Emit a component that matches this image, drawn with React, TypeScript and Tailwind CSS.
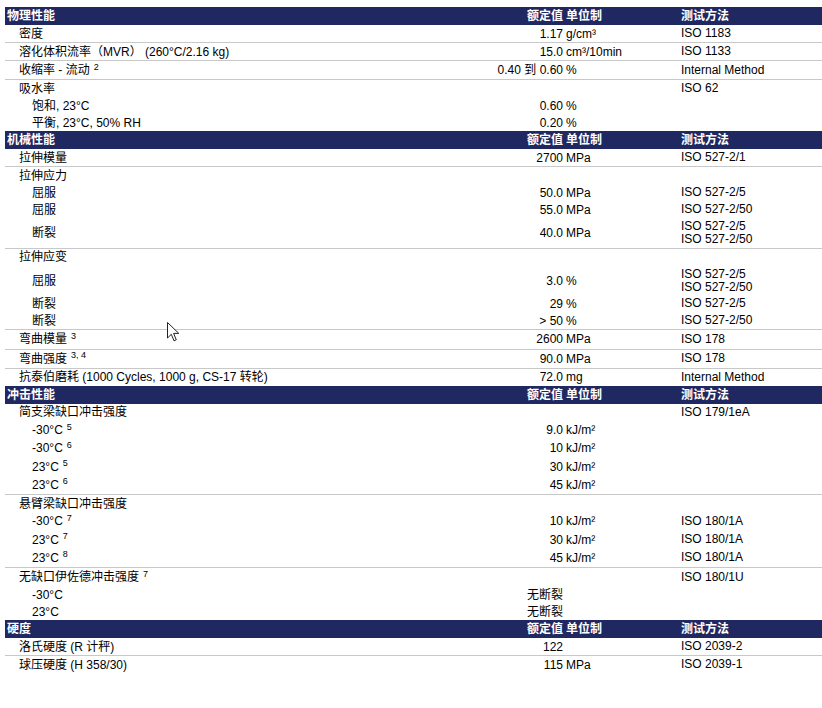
import React from 'react'

type Row = {
  label: string
  sup?: string
  level: 1 | 2
  num?: string
  unit?: string
  method?: string[]
  text?: string // free value, e.g. 无断裂
}

type Section = { title: string; groups: Row[][] }

const SECTIONS: Section[] = [
  {
    title: '物理性能',
    groups: [
      [{ label: '密度', level: 1, num: '1.17', unit: 'g/cm³', method: ['ISO 1183'] }],
      [{ label: '溶化体积流率（MVR） (260°C/2.16 kg)', level: 1, num: '15.0', unit: 'cm³/10min', method: ['ISO 1133'] }],
      [{ label: '收缩率 - 流动', sup: '2', level: 1, num: '0.40 到 0.60', unit: '%', method: ['Internal Method'] }],
      [
        { label: '吸水率', level: 1, method: ['ISO 62'] },
        { label: '饱和, 23°C', level: 2, num: '0.60', unit: '%' },
        { label: '平衡, 23°C, 50% RH', level: 2, num: '0.20', unit: '%' },
      ],
    ],
  },
  {
    title: '机械性能',
    groups: [
      [{ label: '拉伸模量', level: 1, num: '2700', unit: 'MPa', method: ['ISO 527-2/1'] }],
      [
        { label: '拉伸应力', level: 1 },
        { label: '屈服', level: 2, num: '50.0', unit: 'MPa', method: ['ISO 527-2/5'] },
        { label: '屈服', level: 2, num: '55.0', unit: 'MPa', method: ['ISO 527-2/50'] },
        { label: '断裂', level: 2, num: '40.0', unit: 'MPa', method: ['ISO 527-2/5', 'ISO 527-2/50'] },
      ],
      [
        { label: '拉伸应变', level: 1 },
        { label: '屈服', level: 2, num: '3.0', unit: '%', method: ['ISO 527-2/5', 'ISO 527-2/50'] },
        { label: '断裂', level: 2, num: '29', unit: '%', method: ['ISO 527-2/5'] },
        { label: '断裂', level: 2, num: '> 50', unit: '%', method: ['ISO 527-2/50'] },
      ],
      [{ label: '弯曲模量', sup: '3', level: 1, num: '2600', unit: 'MPa', method: ['ISO 178'] }],
      [{ label: '弯曲强度', sup: '3, 4', level: 1, num: '90.0', unit: 'MPa', method: ['ISO 178'] }],
      [{ label: '抗泰伯磨耗 (1000 Cycles, 1000 g, CS-17 转轮)', level: 1, num: '72.0', unit: 'mg', method: ['Internal Method'] }],
    ],
  },
  {
    title: '冲击性能',
    groups: [
      [
        { label: '简支梁缺口冲击强度', level: 1, method: ['ISO 179/1eA'] },
        { label: '-30°C', sup: '5', level: 2, num: '9.0', unit: 'kJ/m²' },
        { label: '-30°C', sup: '6', level: 2, num: '10', unit: 'kJ/m²' },
        { label: '23°C', sup: '5', level: 2, num: '30', unit: 'kJ/m²' },
        { label: '23°C', sup: '6', level: 2, num: '45', unit: 'kJ/m²' },
      ],
      [
        { label: '悬臂梁缺口冲击强度', level: 1 },
        { label: '-30°C', sup: '7', level: 2, num: '10', unit: 'kJ/m²', method: ['ISO 180/1A'] },
        { label: '23°C', sup: '7', level: 2, num: '30', unit: 'kJ/m²', method: ['ISO 180/1A'] },
        { label: '23°C', sup: '8', level: 2, num: '45', unit: 'kJ/m²', method: ['ISO 180/1A'] },
      ],
      [
        { label: '无缺口伊佐德冲击强度', sup: '7', level: 1, method: ['ISO 180/1U'] },
        { label: '-30°C', level: 2, text: '无断裂' },
        { label: '23°C', level: 2, text: '无断裂' },
      ],
    ],
  },
  {
    title: '硬度',
    groups: [
      [{ label: '洛氏硬度 (R 计秤)', level: 1, num: '122', method: ['ISO 2039-2'] }],
      [{ label: '球压硬度 (H 358/30)', level: 1, num: '115', unit: 'MPa', method: ['ISO 2039-1'] }],
    ],
  },
]

const GRID = 'grid grid-cols-[475px_83px_118px_1fr] items-center'

function DataRow({ r }: { r: Row }) {
  const tall = (r.method?.length ?? 0) > 1
  const h = tall ? 'h-[29.5px]' : r.sup ? 'h-[18.3px]' : 'h-[17px]'
  return (
    <div className={`${GRID} ${h}`}>
      <div className={`whitespace-nowrap ${r.level === 1 ? 'pl-[14px]' : 'pl-[27px]'}`}>
        {r.label}
        {r.sup && <sup className="text-[9px] ml-[4px] leading-none">{r.sup}</sup>}
      </div>
      {r.text ? (
        <div className="col-span-2 pl-[47px] whitespace-nowrap">{r.text}</div>
      ) : (
        <>
          <div className="text-right whitespace-nowrap">{r.num}</div>
          <div className="pl-[3px] whitespace-nowrap">{r.unit}</div>
        </>
      )}
      <div className="leading-[13px] whitespace-nowrap">
        {r.method?.map((m, i) => <div key={i}>{m}</div>)}
      </div>
    </div>
  )
}

export default function App() {
  return (
    <div className="relative min-h-[708px] bg-white pt-[7px] pl-[5px] text-[12px] leading-[14px] text-black font-['Liberation_Sans','Noto_Sans_CJK_SC',sans-serif]">
      {SECTIONS.map((s) => (
        <div key={s.title}>
          <div className={`${GRID} h-[18px] bg-[#1f2861] text-white font-bold`}>
            <div className="pl-[2px]">{s.title}</div>
            <div className="text-right">额定值</div>
            <div className="pl-[3px]">单位制</div>
            <div>测试方法</div>
          </div>
          {s.groups.map((g, gi) => (
            <div key={gi} className={gi < s.groups.length - 1 ? 'border-b border-[#c8c8c8]' : ''}>
              {g.map((r, ri) => <DataRow key={ri} r={r} />)}
            </div>
          ))}
        </div>
      ))}

      {/* mouse pointer */}
      <svg className="absolute left-[167px] top-[322px]" width="13" height="21" viewBox="0 0 13 21">
        <path d="M0.5 0.5 L0.5 16 L4.3 12.3 L7 18.8 L9.3 17.8 L6.6 11.4 L11.8 11.4 Z" fill="#fff" stroke="#222" strokeWidth="1" />
      </svg>
    </div>
  )
}
